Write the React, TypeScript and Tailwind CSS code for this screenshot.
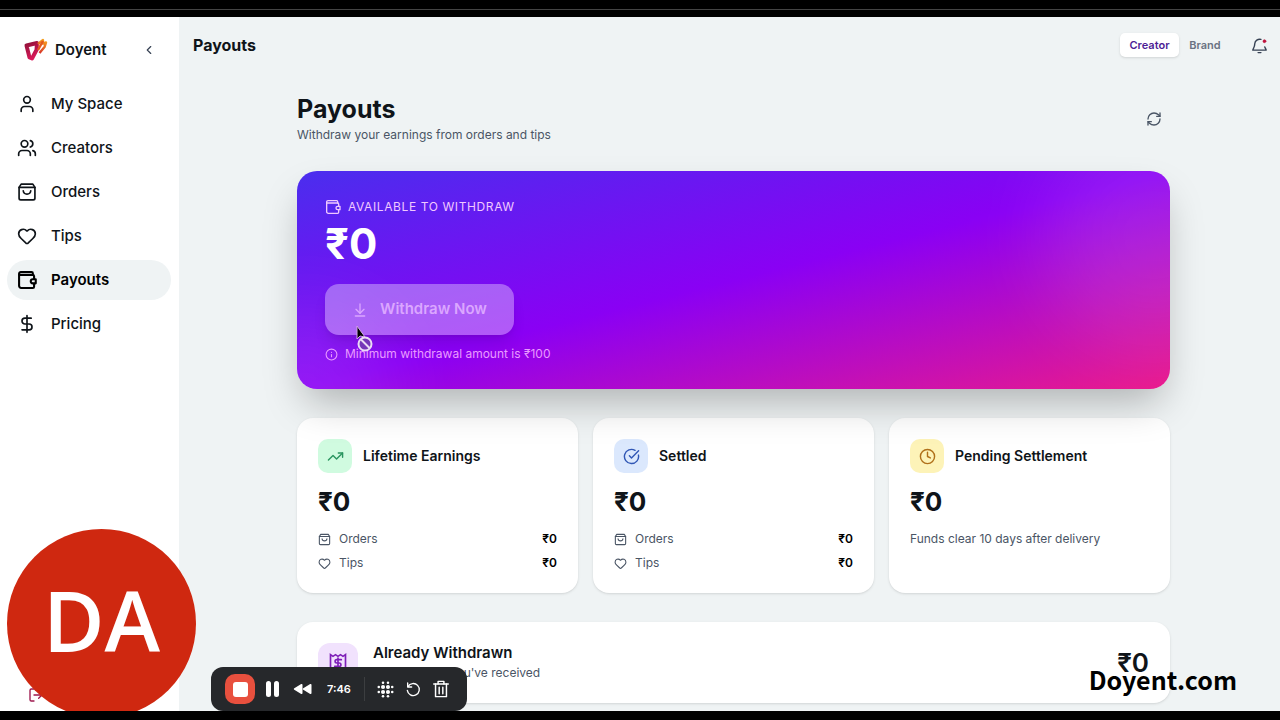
import type { ReactNode, SVGProps } from 'react'
import {
    ArrowDownToLine,
    ChevronLeft,
    CircleCheckBig,
    Clock,
    DollarSign,
    Heart,
    Info,
    LogOut,
    RefreshCw,
    TrendingUp,
    User,
    Users,
} from 'lucide-react'

type IconProps = SVGProps<SVGSVGElement>

/* =========================
   Icons
========================== */
const strokeProps = {
    viewBox: '0 0 24 24',
    fill: 'none',
    stroke: 'currentColor',
    strokeWidth: 2,
    strokeLinecap: 'round' as const,
    strokeLinejoin: 'round' as const,
    'aria-hidden': true,
}

function WalletIcon(props: IconProps) {
    return (
        <svg {...strokeProps} {...props}>
            <path d="M20.500 10V7.500a1.500 1.500 0 0 0-1.500-1.500H3" />
            <path d="M19 6V4a1.500 1.500 0 0 0-1.500-1.500H4.500A2 2 0 0 0 2.500 4.500V19a2.500 2.500 0 0 0 2.500 2.500h14a1.500 1.500 0 0 0 1.500-1.500v-3.500" />
            <path d="M22.500 11h-3.500a2.500 2.500 0 0 0 0 5h3.500z" />
        </svg>
    )
}

function BagIcon(props: IconProps) {
    return (
        <svg {...strokeProps} {...props}>
            <path d="M2.500 6.500 5 2.500h14l2.500 4v13a2 2 0 0 1-2 2h-15a2 2 0 0 1-2-2z" />
            <path d="M2.500 6.500h19" />
            <path d="M7.500 10.500c.500 5.300 8.500 5.300 9 0" />
        </svg>
    )
}

function BellIcon(props: IconProps) {
    return (
        <svg {...strokeProps} {...props}>
            <path d="M14 3.300A7 7 0 0 0 5.300 9.500C5.300 14 3.500 15.500 2.500 18.500h19c-.500-1.500-1.400-2.800-2-4.500" />
            <path d="M10 22h4" />
            <circle cx="19" cy="6" r="2" fill="#be123c" stroke="#be123c" strokeWidth="1" />
        </svg>
    )
}

function ReceiptIcon(props: IconProps) {
    return (
        <svg {...strokeProps} strokeLinejoin="miter" {...props}>
            <path d="M3 2l3 2 3-2 3 2 3-2 3 2 3-2v20l-3-2-3 2-3-2-3 2-3-2-3 2z" />
            <path d="M16 8h-5.500a2 2 0 0 0 0 4h3a2 2 0 0 1 0 4H8" />
            <path d="M12 6v12" />
        </svg>
    )
}

function Logo() {
    return (
        <svg viewBox="0 0 24 24" className="size-6" fill="none" aria-hidden="true">
            <defs>
                <linearGradient id="logo-left" x1="2" y1="4" x2="12" y2="22" gradientUnits="userSpaceOnUse">
                    <stop stopColor="#8f1238" />
                    <stop offset="1" stopColor="#e5195f" />
                </linearGradient>
                <linearGradient id="logo-right" x1="21" y1="2" x2="14" y2="16" gradientUnits="userSpaceOnUse">
                    <stop stopColor="#f6a21e" />
                    <stop offset="1" stopColor="#d4262c" />
                </linearGradient>
            </defs>
            <path d="M2.500 7.500 13 5 12.500 12 8 20.500 5.500 19.500z" stroke="url(#logo-left)" strokeWidth="4" strokeLinejoin="round" />
            <path d="M14 6 19 2 18.500 5.500 22 4.500 20.500 9 15.500 15" stroke="url(#logo-right)" strokeWidth="2.400" strokeLinejoin="round" />
            <path d="M19 3 14 12" stroke="#e2571f" strokeWidth="2.400" />
        </svg>
    )
}

/* =========================
   Sidebar
========================== */
const NAV = [
    { label: 'My Space', Icon: User },
    { label: 'Creators', Icon: Users },
    { label: 'Orders', Icon: BagIcon },
    { label: 'Tips', Icon: Heart },
    { label: 'Payouts', Icon: WalletIcon, active: true },
    { label: 'Pricing', Icon: DollarSign },
]

function Sidebar() {
    return (
        <aside className="flex w-[179px] shrink-0 flex-col bg-white">
            <div className="flex h-[66px] shrink-0 items-center gap-[7px] pl-6 pr-5">
                <Logo />
                <span className="text-[15px] font-semibold">Doyent</span>
                <button type="button" aria-label="Collapse sidebar" className="ml-auto flex size-5 items-center justify-center text-gray-700">
                    <ChevronLeft className="size-3.5" strokeWidth={2} />
                </button>
            </div>
            <nav className="flex flex-col gap-1 pl-[7px] pr-2 pt-px">
                {NAV.map(({ label, Icon, active }) => (
                    <a
                        key={label}
                        href="#"
                        className={
                            active
                                ? 'flex h-10 items-center gap-3.5 rounded-full bg-[#eff3f4] px-2.5 text-[15px] font-semibold text-black'
                                : 'flex h-10 items-center gap-3.5 rounded-full px-2.5 text-[15px] font-medium'
                        }
                    >
                        <Icon className="size-5" strokeWidth={active ? 2.5 : 2} />
                        {label}
                    </a>
                ))}
            </nav>
            <a href="#" aria-label="Log out" className="mb-2 ml-7 mt-auto text-[#9d174d]">
                <LogOut className="size-4" />
            </a>
        </aside>
    )
}

/* =========================
   Cards
========================== */
function StatCard({ title, icon, tint, children }: { title: string; icon: ReactNode; tint: string; children: ReactNode }) {
    return (
        <section className="rounded-2xl bg-white px-[21px] pb-[18px] pt-[21px] shadow-sm">
            <div className="flex items-center gap-[11px]">
                <div className={`flex size-[34px] items-center justify-center rounded-[10px] ${tint}`}>{icon}</div>
                <h2 className="text-sm font-semibold">{title}</h2>
            </div>
            <p className="mt-[13px] text-[26px] font-bold leading-8">₹0</p>
            <div className="mt-[9px] text-xs leading-6 text-gray-600">{children}</div>
        </section>
    )
}

function Breakdown() {
    return (
        <dl>
            <div className="flex items-center gap-2">
                <BagIcon className="size-[13px]" />
                <dt>Orders</dt>
                <dd className="ml-auto font-semibold text-black">₹0</dd>
            </div>
            <div className="flex items-center gap-2">
                <Heart className="size-[13px]" />
                <dt>Tips</dt>
                <dd className="ml-auto font-semibold text-black">₹0</dd>
            </div>
        </dl>
    )
}

function Hero() {
    return (
        <section className="relative mt-[26px] rounded-[20px] bg-linear-to-br/srgb from-[#4a2eee] via-[#8a00f4] to-[#ea1a8c] px-7 pb-[25px] pt-[26px] shadow-[0_20px_40px_-8px_rgba(0,0,0,0.28)]">
            <div className="absolute inset-0 overflow-hidden rounded-[20px]">
                <div className="absolute -right-24 -top-12 size-56 rounded-full bg-white/10 blur-2xl"></div>
                <div className="absolute -bottom-24 -left-20 size-44 rounded-full bg-white/10 blur-2xl"></div>
            </div>
            <div className="relative flex flex-col items-start text-[#f0c8ff]">
                <div className="flex items-center gap-[7px] text-xs leading-5 tracking-wider">
                    <WalletIcon className="size-4" />
                    AVAILABLE TO WITHDRAW
                </div>
                <p className="mt-1 text-[42px] font-bold leading-[46px] text-white">₹0</p>
                <button
                    type="button"
                    disabled
                    className="mt-[17px] flex h-[51px] w-[189px] cursor-not-allowed items-center justify-center gap-3 rounded-[14px] bg-white/35 text-[15px] font-semibold text-[#dba6ff] shadow-lg"
                >
                    <ArrowDownToLine className="size-4" />
                    Withdraw Now
                </button>
                <p className="mt-[9px] flex items-center gap-[7px] text-xs leading-5 text-[#e99bff]">
                    <Info className="size-[13px]" />
                    Minimum withdrawal amount is ₹100
                </p>
            </div>
            {/* disabled pointer */}
            <svg viewBox="0 0 22 30" className="absolute left-[57px] top-[153px] h-[30px] w-[22px]" fill="none" aria-hidden="true">
                <path d="M3 2v13l3-3 5 1z" fill="#000" stroke="#cfa5e6" strokeWidth="1" />
                <circle cx="11" cy="20" r="6.500" fill="#7436b8" stroke="#eadcf5" strokeWidth="2" />
                <path d="m7 15.500 8.500 8.500" stroke="#eadcf5" strokeWidth="2" />
            </svg>
        </section>
    )
}

/* =========================
   Recorder overlay
========================== */
const GRID_DOTS = [2.5, 8.5, 15.5, 21.5]

function Recorder() {
    return (
        <div className="absolute bottom-0 left-[211px] flex h-11 w-64 items-center rounded-xl bg-[#26282b] pl-3.5 text-white">
            <button type="button" aria-label="Stop" className="flex size-[30px] items-center justify-center rounded-[10px] bg-[#e8503e]">
                <span className="size-[15px] rounded-[3px] bg-white"></span>
            </button>
            <button type="button" aria-label="Pause" className="ml-[11px] flex gap-[3px]">
                <span className="h-4 w-[5px] rounded-sm bg-white"></span>
                <span className="h-4 w-[5px] rounded-sm bg-white"></span>
            </button>
            <button type="button" aria-label="Rewind" className="ml-3.5">
                <svg viewBox="0 0 20 12" className="h-3 w-5" fill="#fff" aria-hidden="true">
                    <path d="M9.500 1.800v8.400c0 .7-.7 1-1.300.7L1.300 6.800c-.6-.4-.6-1.200 0-1.600L8.200 1.100c.6-.4 1.300 0 1.300.7z" />
                    <path d="M18.500 1.800v8.400c0 .7-.7 1-1.300.7l-6.900-4.100c-.6-.4-.6-1.200 0-1.600l6.900-4.100c.6-.4 1.300 0 1.300.7z" />
                </svg>
            </button>
            <span className="ml-3.5 text-[11px] font-semibold">7:46</span>
            <span className="ml-[13px] h-6 w-px bg-white/10"></span>
            <button type="button" aria-label="Blur" className="ml-3">
                <svg viewBox="0 0 24 24" className="size-[17px]" fill="#fff" aria-hidden="true">
                    {GRID_DOTS.map((x, i) =>
                        GRID_DOTS.map((y, j) => {
                            const edgeX = i % 3 === 0
                            const edgeY = j % 3 === 0
                            if (edgeX && edgeY) return null
                            return <circle key={`${x}-${y}`} cx={x} cy={y} r={edgeX || edgeY ? 1.8 : 2.9} />
                        })
                    )}
                </svg>
            </button>
            <button type="button" aria-label="Restart" className="ml-[11px]">
                <svg {...strokeProps} className="size-4">
                    <path d="M4 3v6h6" />
                    <path d="M4.500 8.500a9 9 0 1 1-1 5.500" />
                </svg>
            </button>
            <button type="button" aria-label="Delete" className="ml-3">
                <svg {...strokeProps} className="h-[18px] w-4" viewBox="0 0 22 24">
                    <path d="M1 5h20" />
                    <path d="M7 5V1.500h8V5" />
                    <path d="M3.500 5v17.500h15V5" />
                    <path d="M8.500 9.500v9M13.500 9.500v9" />
                </svg>
            </button>
        </div>
    )
}

export default function App() {
    return (
        <div className="flex h-screen w-full flex-col bg-black font-['Inter','Noto_Sans',sans-serif] text-[#0f1419]">
            <div className="h-[17px] shrink-0 pt-[9px]">
                <div className="h-px bg-[#444]"></div>
            </div>
            <div className="relative flex min-h-0 flex-1 overflow-hidden bg-[#eff3f4]">
                <Sidebar />
                <div className="min-w-0 flex-1">
                    <header className="flex h-14 items-center pl-3.5 pr-3">
                        <span className="text-base font-bold">Payouts</span>
                        <div className="ml-auto flex text-[11px] font-semibold">
                            <button type="button" className="h-6 w-[59px] rounded-[5px] bg-white text-[#4c1d95] shadow-sm">Creator</button>
                            <button type="button" className="h-6 w-[52px] text-gray-500">Brand</button>
                        </div>
                        <button type="button" aria-label="Notifications" className="ml-5 text-gray-700">
                            <BellIcon className="size-[17px]" />
                        </button>
                    </header>
                    <main className="ml-2 px-6 pt-5">
                        <div className="mx-auto max-w-[873px]">
                            <div className="flex items-center justify-between">
                                <div>
                                    <h1 className="text-[25px] font-bold leading-8">Payouts</h1>
                                    <p className="text-xs leading-5 text-gray-600">Withdraw your earnings from orders and tips</p>
                                </div>
                                <button type="button" aria-label="Refresh" className="p-2 text-gray-600">
                                    <RefreshCw className="size-4" />
                                </button>
                            </div>
                            <Hero />
                            <div className="mt-[29px] grid grid-cols-3 gap-[15px]">
                                <StatCard title="Lifetime Earnings" tint="bg-[#d0fbe0]" icon={<TrendingUp className="size-[17px] text-[#2a9560]" />}>
                                    <Breakdown />
                                </StatCard>
                                <StatCard title="Settled" tint="bg-[#dbe8fd]" icon={<CircleCheckBig className="size-[17px] text-[#3157b5]" />}>
                                    <Breakdown />
                                </StatCard>
                                <StatCard title="Pending Settlement" tint="bg-[#fdf3b8]" icon={<Clock className="size-[17px] text-[#b0701a]" />}>
                                    <p>Funds clear 10 days after delivery</p>
                                </StatCard>
                            </div>
                            <section className="mt-[29px] flex h-[81px] items-center rounded-2xl bg-white px-[21px] shadow-sm">
                                <div className="flex size-10 items-center justify-center rounded-xl bg-[#f1e2fd]">
                                    <ReceiptIcon className="size-5 text-[#7e1fb8]" />
                                </div>
                                <div className="ml-[15px]">
                                    <h2 className="text-[15px] font-semibold leading-5">Already Withdrawn</h2>
                                    <p className="text-xs leading-5 text-gray-600">Total amount you've received</p>
                                </div>
                                <p className="ml-auto text-[26px] font-semibold leading-8">₹0</p>
                            </section>
                        </div>
                    </main>
                </div>

                {/* Camera bubble */}
                <div className="absolute -bottom-[7px] left-[7px] flex size-[189px] items-center justify-center rounded-full bg-[#cf2810] pb-2 font-['Open_Sans',sans-serif] text-[84px] font-semibold text-white">
                    DA
                </div>
                <Recorder />
                <div className="absolute bottom-5 right-[43px] font-['Noto_Sans_CJK_SC',sans-serif] text-[25px] font-bold leading-6 text-black">Doyent.com</div>
            </div>
            <div className="h-[9px] shrink-0"></div>
        </div>
    )
}
